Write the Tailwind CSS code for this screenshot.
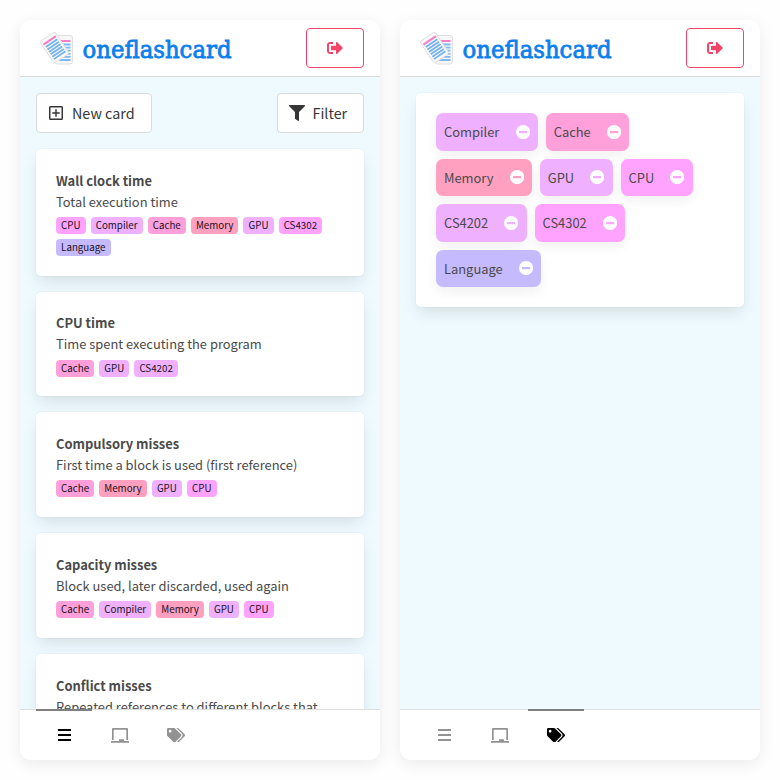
<!DOCTYPE html>
<html lang="en">
<head>
<meta charset="utf-8">
<title>oneflashcard</title>
<script src="https://cdn.jsdelivr.net/npm/@tailwindcss/browser@4"></script>
</head>
<body class="bg-[#fefefe] text-[#4a4a4a] text-[12.900px] leading-[21.6px] font-['Noto_Sans_CJK_SC','Open_Sans',sans-serif]">
<svg class="hidden">
  <symbol id="logo" viewBox="0 0 36 36">
    <g>
      <rect x="17" y="5.500" width="17.500" height="28.500" rx="2.500" fill="#f8f8f8" stroke="#dedede" stroke-width="1"/>
      <path d="M20 11H32.500" stroke="#f47fc8" stroke-width="2.200"/>
      <path d="M20 14.500H32.500M20 17.600H32.500M20 20.700H32.500M20 23.800H32.500M20 26.900H32.500M20 30H32.500" stroke="#7db9f3" stroke-width="1.800"/>
    </g>
    <g transform="rotate(-34 16.5 17.5)">
      <rect x="7.500" y="4.500" width="18" height="26" rx="2.500" fill="#fafafa" stroke="#dedede" stroke-width="1"/>
      <path d="M9 8.900H24" stroke="#f47fc8" stroke-width="2.200"/>
      <path d="M9.500 12.300H23.500M9.500 15.200H23.500M9.500 18.100H23.500M9.500 21H23.500M9.500 23.900H23.500M9.500 26.800H23.500" stroke="#73b2f2" stroke-width="1.800"/>
    </g>
  </symbol>
  <symbol id="signout" viewBox="0 0 512 512"><path fill="currentColor" d="M497 273L329 441c-15 15-41 4.500-41-17v-96H152c-13.300 0-24-10.700-24-24v-96c0-13.300 10.700-24 24-24h136V88c0-21.400 25.900-32 41-17l168 168c9.300 9.400 9.300 24.600 0 34zM192 436v-40c0-6.600-5.400-12-12-12H96c-17.700 0-32-14.300-32-32V160c0-17.700 14.300-32 32-32h84c6.600 0 12-5.400 12-12V76c0-6.600-5.400-12-12-12H96c-53 0-96 43-96 96v192c0 53 43 96 96 96h84c6.600 0 12-5.400 12-12z"/></symbol>
  <symbol id="plus" viewBox="0 0 14 14"><path fill="none" stroke="currentColor" stroke-width="1.500" d="M1.500.75H12.500Q13.250.75 13.250 1.500V12.500Q13.250 13.250 12.500 13.250H1.500Q.75 13.250.75 12.500V1.500Q.75.75 1.500.75ZM7 3.200V10.800M3.200 7H10.800"/></symbol>
  <symbol id="filter" viewBox="0 0 512 512"><path fill="currentColor" d="M488 0H24C2.700 0-8 25.900 7.100 41L192 225.900V432c0 7.800 3.800 15.200 10.200 19.700l80 56C298 518.700 320 507.700 320 488V225.900L505 41C520 25.900 509.300 0 488 0z"/></symbol>
  <symbol id="minus" viewBox="0 0 14 14"><path fill="#fff" fill-rule="evenodd" d="M7 0a7 7 0 1 0 0 14A7 7 0 0 0 7 0ZM3 5.900H11V8.100H3Z"/></symbol>
  <symbol id="bars" viewBox="0 0 13 12"><path fill="currentColor" d="M0 0H13V2H0ZM0 5H13V7H0ZM0 10H13V12H0Z"/></symbol>
  <symbol id="laptop" viewBox="0 0 18 15"><path fill="currentColor" d="M1 1Q1 0 2 0H16Q17 0 17 1V12H15.300V1.700H2.700V12H1ZM0 13H8V11.200H13V13H18V14.800H0Z"/></symbol>
  <symbol id="tags" viewBox="0 0 640 512"><path fill="currentColor" d="M497.900 225.900L286.100 14.100A48 48 0 0 0 252.100 0H48C21.500 0 0 21.500 0 48v204.100a48 48 0 0 0 14.100 33.900l211.800 211.800c18.700 18.700 49.100 18.700 67.900 0l204.100-204.100c18.700-18.700 18.700-49.100 0-67.800zM112 160c-26.500 0-48-21.500-48-48s21.500-48 48-48 48 21.500 48 48-21.500 48-48 48zm513.900 133.800L421.800 497.900c-18.700 18.700-49.100 18.700-67.900 0l-.4-.4L527.600 323.500c17-17 26.400-39.600 26.400-63.600s-9.400-46.600-26.400-63.600L331.400 0h48.700a48 48 0 0 1 33.900 14.100l211.800 211.800c18.700 18.700 18.700 49.100.1 67.900z"/></symbol>
</svg>

<div class="flex gap-5 p-5">
  <!-- Cards screen -->
  <main class="flex h-[740px] w-[360px] flex-col overflow-hidden rounded-[11px] bg-white shadow-[0_4px_16px_rgba(0,0,0,0.08)]">
    <header class="flex h-[57px] shrink-0 items-start justify-between border-b border-[#dbdbdb] pt-2 pr-4 pl-[18px]">
      <div class="flex h-10 items-center gap-2">
        <svg class="size-9"><use href="#logo"/></svg>
        <svg class="h-9 w-[152px] overflow-visible"><text x="0.500" y="27.500" textLength="149" lengthAdjust="spacingAndGlyphs" fill="#0a7fee" stroke="#0a7fee" stroke-width="0.800" class="font-['DejaVu_Serif',serif] text-[25px]">oneflashcard</text></svg>
      </div>
      <button class="flex h-10 w-[58px] items-center justify-center rounded border border-[#f14668] text-[#f14668]"><svg class="size-4"><use href="#signout"/></svg></button>
    </header>
    <div class="flex min-h-0 flex-1 flex-col gap-4 overflow-hidden bg-[#eefaff] px-4 pt-[16.200px]">
      <div class="flex h-10 shrink-0 justify-between text-[14.350px] text-[#363636]">
        <button class="flex w-[115.500px] items-center gap-[9px] rounded border border-[#dbdbdb] bg-white pl-3"><svg class="size-[14px]"><use href="#plus"/></svg>New card</button>
        <button class="flex w-[87.500px] items-center gap-2 rounded border border-[#dbdbdb] bg-white pl-[11px]"><svg class="size-4"><use href="#filter"/></svg>Filter</button>
      </div>
      <article class="shrink-0 rounded-[5px] bg-white p-5 shadow-[0_8px_16px_-2px_rgba(10,10,10,0.1),0_0_0_1px_rgba(10,10,10,0.02)]">
        <h2 class="pt-[0.600px] -mb-[0.600px] font-bold">Wall clock time</h2>
        <p>Total execution time</p>
        <div class="flex flex-wrap gap-x-[5px] gap-y-[4.600px] pt-[4.800px] -mb-[0.200px] text-[9.750px] leading-[17px] text-[#201020]">
          <span class="rounded bg-[#ffa3ff] px-[5.100px]">CPU</span><span class="rounded bg-[#eeb0ff] px-[5.100px]">Compiler</span><span class="rounded bg-[#ffa0da] px-[5.100px]">Cache</span><span class="rounded bg-[#ffa0c0] px-[5.100px]">Memory</span><span class="rounded bg-[#eeb0ff] px-[5.100px]">GPU</span><span class="rounded bg-[#ffa3ff] px-[5.100px]">CS4302</span><span class="rounded bg-[#c6baff] px-[5.100px]">Language</span>
        </div>
      </article>
      <article class="shrink-0 rounded-[5px] bg-white p-5 shadow-[0_8px_16px_-2px_rgba(10,10,10,0.1),0_0_0_1px_rgba(10,10,10,0.02)]">
        <h2 class="pt-[0.600px] -mb-[0.600px] font-bold">CPU time</h2>
        <p>Time spent executing the program</p>
        <div class="flex flex-wrap gap-x-[5px] pt-[4.800px] -mb-[0.200px] text-[9.750px] leading-[17px] text-[#201020]">
          <span class="rounded bg-[#ffa0da] px-[5.100px]">Cache</span><span class="rounded bg-[#eeb0ff] px-[5.100px]">GPU</span><span class="rounded bg-[#eeb0ff] px-[5.100px]">CS4202</span>
        </div>
      </article>
      <article class="shrink-0 rounded-[5px] bg-white p-5 shadow-[0_8px_16px_-2px_rgba(10,10,10,0.1),0_0_0_1px_rgba(10,10,10,0.02)]">
        <h2 class="pt-[0.600px] -mb-[0.600px] font-bold">Compulsory misses</h2>
        <p>First time a block is used (first reference)</p>
        <div class="flex flex-wrap gap-x-[5px] pt-[4.800px] -mb-[0.200px] text-[9.750px] leading-[17px] text-[#201020]">
          <span class="rounded bg-[#ffa0da] px-[5.100px]">Cache</span><span class="rounded bg-[#ffa0c0] px-[5.100px]">Memory</span><span class="rounded bg-[#eeb0ff] px-[5.100px]">GPU</span><span class="rounded bg-[#ffa3ff] px-[5.100px]">CPU</span>
        </div>
      </article>
      <article class="shrink-0 rounded-[5px] bg-white p-5 shadow-[0_8px_16px_-2px_rgba(10,10,10,0.1),0_0_0_1px_rgba(10,10,10,0.02)]">
        <h2 class="pt-[0.600px] -mb-[0.600px] font-bold">Capacity misses</h2>
        <p>Block used, later discarded, used again</p>
        <div class="flex flex-wrap gap-x-[5px] pt-[4.800px] -mb-[0.200px] text-[9.750px] leading-[17px] text-[#201020]">
          <span class="rounded bg-[#ffa0da] px-[5.100px]">Cache</span><span class="rounded bg-[#eeb0ff] px-[5.100px]">Compiler</span><span class="rounded bg-[#ffa0c0] px-[5.100px]">Memory</span><span class="rounded bg-[#eeb0ff] px-[5.100px]">GPU</span><span class="rounded bg-[#ffa3ff] px-[5.100px]">CPU</span>
        </div>
      </article>
      <article class="shrink-0 rounded-[5px] bg-white p-5 shadow-[0_8px_16px_-2px_rgba(10,10,10,0.1),0_0_0_1px_rgba(10,10,10,0.02)]">
        <h2 class="pt-[0.600px] -mb-[0.600px] font-bold">Conflict misses</h2>
        <p>Repeated references to different blocks that</p>
      </article>
    </div>
    <nav class="flex h-[51px] shrink-0 border-t border-[#dedede] px-4 text-[#929292]">
      <a class="-mt-px flex w-14 items-center justify-center border-t-2 border-[#808080] pb-px text-black"><svg class="h-3 w-[13px]"><use href="#bars"/></svg></a>
      <a class="flex w-14 items-center justify-center"><svg class="h-[15px] w-[18px]"><use href="#laptop"/></svg></a>
      <a class="flex w-14 items-center justify-center"><svg class="h-[14.400px] w-[18px]"><use href="#tags"/></svg></a>
    </nav>
  </main>

  <!-- Tags screen -->
  <main class="flex h-[740px] w-[360px] flex-col overflow-hidden rounded-[11px] bg-white shadow-[0_4px_16px_rgba(0,0,0,0.08)]">
    <header class="flex h-[57px] shrink-0 items-start justify-between border-b border-[#dbdbdb] pt-2 pr-4 pl-[18px]">
      <div class="flex h-10 items-center gap-2">
        <svg class="size-9"><use href="#logo"/></svg>
        <svg class="h-9 w-[152px] overflow-visible"><text x="0.500" y="27.500" textLength="149" lengthAdjust="spacingAndGlyphs" fill="#0a7fee" stroke="#0a7fee" stroke-width="0.800" class="font-['DejaVu_Serif',serif] text-[25px]">oneflashcard</text></svg>
      </div>
      <button class="flex h-10 w-[58px] items-center justify-center rounded border border-[#f14668] text-[#f14668]"><svg class="size-4"><use href="#signout"/></svg></button>
    </header>
    <div class="min-h-0 flex-1 bg-[#eefaff] px-4 pt-4">
      <section class="flex flex-wrap gap-2 rounded-[5px] bg-white p-5 shadow-[0_8px_16px_-2px_rgba(10,10,10,0.1),0_0_0_1px_rgba(10,10,10,0.02)]">
        <span class="flex items-center gap-[16.200px] rounded-[7px] bg-[#eeb0ff] p-2 shadow-[0_5px_12px_rgba(0,0,0,0.06)]">Compiler<svg class="size-[14.200px]"><use href="#minus"/></svg></span>
        <span class="flex items-center gap-[16.200px] rounded-[7px] bg-[#ffa0da] p-2 shadow-[0_5px_12px_rgba(0,0,0,0.06)]">Cache<svg class="size-[14.200px]"><use href="#minus"/></svg></span>
        <span class="flex items-center gap-[16.200px] rounded-[7px] bg-[#ffa0c0] p-2 shadow-[0_5px_12px_rgba(0,0,0,0.06)]">Memory<svg class="size-[14.200px]"><use href="#minus"/></svg></span>
        <span class="flex items-center gap-[16.200px] rounded-[7px] bg-[#eeb0ff] p-2 shadow-[0_5px_12px_rgba(0,0,0,0.06)]">GPU<svg class="size-[14.200px]"><use href="#minus"/></svg></span>
        <span class="flex items-center gap-[16.200px] rounded-[7px] bg-[#ffa3ff] p-2 shadow-[0_5px_12px_rgba(0,0,0,0.06)]">CPU<svg class="size-[14.200px]"><use href="#minus"/></svg></span>
        <span class="flex items-center gap-[16.200px] rounded-[7px] bg-[#eeb0ff] p-2 shadow-[0_5px_12px_rgba(0,0,0,0.06)]">CS4202<svg class="size-[14.200px]"><use href="#minus"/></svg></span>
        <span class="flex items-center gap-[16.200px] rounded-[7px] bg-[#ffa3ff] p-2 shadow-[0_5px_12px_rgba(0,0,0,0.06)]">CS4302<svg class="size-[14.200px]"><use href="#minus"/></svg></span>
        <span class="flex items-center gap-[16.200px] rounded-[7px] bg-[#c6baff] p-2 shadow-[0_5px_12px_rgba(0,0,0,0.06)]">Language<svg class="size-[14.200px]"><use href="#minus"/></svg></span>
      </section>
    </div>
    <nav class="flex h-[51px] shrink-0 border-t border-[#dedede] px-4 text-[#929292]">
      <a class="flex w-14 items-center justify-center"><svg class="h-3 w-[13px]"><use href="#bars"/></svg></a>
      <a class="flex w-14 items-center justify-center"><svg class="h-[15px] w-[18px]"><use href="#laptop"/></svg></a>
      <a class="-mt-px flex w-14 items-center justify-center border-t-2 border-[#808080] pb-px text-black"><svg class="h-[14.400px] w-[18px]"><use href="#tags"/></svg></a>
    </nav>
  </main>
</div>
</body>
</html>
